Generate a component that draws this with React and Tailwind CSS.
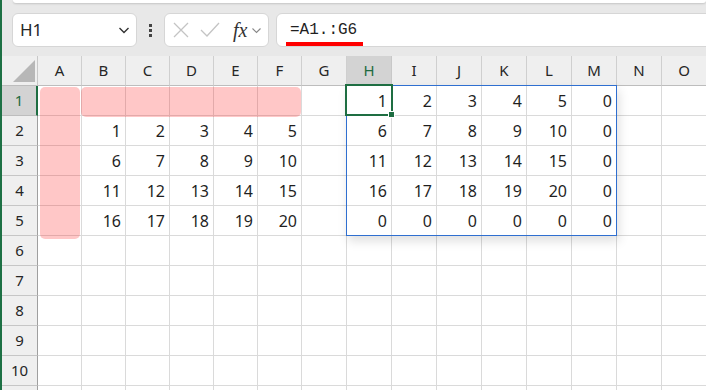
import React from 'react';

const cols = ['A', 'B', 'C', 'D', 'E', 'F', 'G', 'H', 'I', 'J', 'K', 'L', 'M', 'N', 'O'];

// values keyed by row -> column letter
const data = {
  1: { H: 1, I: 2, J: 3, K: 4, L: 5, M: 0 },
  2: { B: 1, C: 2, D: 3, E: 4, F: 5, H: 6, I: 7, J: 8, K: 9, L: 10, M: 0 },
  3: { B: 6, C: 7, D: 8, E: 9, F: 10, H: 11, I: 12, J: 13, K: 14, L: 15, M: 0 },
  4: { B: 11, C: 12, D: 13, E: 14, F: 15, H: 16, I: 17, J: 18, K: 19, L: 20, M: 0 },
  5: { B: 16, C: 17, D: 18, E: 19, F: 20, H: 0, I: 0, J: 0, K: 0, L: 0, M: 0 },
};

const rows = [1, 2, 3, 4, 5, 6, 7, 8, 9, 10, 11];

const ui = { fontFamily: '"Noto Sans", "Noto Sans CJK JP", sans-serif' };

const FormulaBar = () => (
  <div className="h-[56px] shrink-0 bg-[#e8e8e8]">
    <div className="ml-[11px] h-[3px] bg-white rounded-b-md shadow-[0_1px_2px_rgba(0,0,0,0.15)]"></div>
    <div className="mt-[10px] h-[34px] flex pl-[10px]">
      <div className="w-[125px] h-full bg-white rounded-md border border-[#d6d6d6] flex items-center justify-between pl-[7px] pr-[5px]">
        <span className="text-[17px] text-[#262626]" style={ui}>H1</span>
        <svg width="14" height="14" viewBox="0 0 14 14" fill="none" stroke="#333" strokeWidth="1.4">
          <path d="M2.5 5l4.5 4.5L11.5 5" />
        </svg>
      </div>
      <div className="w-[27px] flex items-center justify-center">
        <div className="flex flex-col gap-[2px]">
          <span className="w-[3px] h-[3px] bg-[#444]"></span>
          <span className="w-[3px] h-[3px] bg-[#444]"></span>
          <span className="w-[3px] h-[3px] bg-[#444]"></span>
        </div>
      </div>
      <div className="w-[105px] h-full bg-white rounded-md border border-[#d6d6d6] flex items-center pl-[7px]">
        <svg width="18" height="18" viewBox="0 0 18 18" fill="none" stroke="#c4c4c4" strokeWidth="1.3">
          <path d="M2 2l14 14M16 2L2 16" />
        </svg>
        <svg className="ml-[10px]" width="20" height="16" viewBox="0 0 20 16" fill="none" stroke="#c4c4c4" strokeWidth="1.3">
          <path d="M1 8l6 6L19 1" />
        </svg>
        <span className="ml-[13px] text-[20px] italic text-[#333] leading-none" style={{ fontFamily: '"Liberation Serif", serif' }}>fx</span>
        <svg className="ml-[4px]" width="11" height="11" viewBox="0 0 11 11" fill="none" stroke="#888" strokeWidth="1.1">
          <path d="M1.5 3.5l4 4 4-4" />
        </svg>
      </div>
      <div className="relative flex-1 ml-[7px] -mr-2 h-full bg-white rounded-l-md border border-[#d6d6d6] flex items-center pl-[13px]">
        <span className="text-[16px] text-[#1f1f1f]" style={{ fontFamily: '"Liberation Mono", monospace' }}>=A1.:G6</span>
        <div className="absolute left-[9px] top-[28px] w-[77px] h-[4px] bg-[#ff0000]"></div>
      </div>
    </div>
  </div>
);

const Sheet = () => (
  <div className="relative">
    <div className="grid grid-cols-[36px_repeat(6,44px)_repeat(9,45px)] auto-rows-[30px]" style={ui}>
      <div className="bg-[#efefef] border-r border-b border-r-[#c8c8c8] border-b-[#bdbdbd] relative">
        <svg className="absolute right-[2px] bottom-[3px]" width="22" height="22" viewBox="0 0 22 22">
          <polygon points="22,0 22,22 0,22" fill="#b7b7b7" />
        </svg>
      </div>
      {cols.map((c) => (
        <div
          key={c}
          className={
            c === 'H'
              ? 'bg-[#d3d3d3] text-[#1d6b40] border-r border-r-[#c8c8c8] border-b-2 border-b-[#1e6e42] flex items-center justify-center text-[15px] pt-[1px]'
              : 'bg-[#efefef] text-[#262626] border-r border-b border-r-[#cfcfcf] border-b-[#bdbdbd] flex items-center justify-center text-[15px]'
          }
        >
          {c}
        </div>
      ))}
      {rows.map((r) => (
        <React.Fragment key={r}>
          <div
            className={
              r === 1
                ? 'bg-[#d3d3d3] text-[#1d6b40] border-r-2 border-r-[#1e6e42] border-b border-b-[#bdbdbd] flex items-center justify-center text-[15px]'
                : 'bg-[#efefef] text-[#262626] border-r border-b border-r-[#9f9f9f] border-b-[#c6c6c6] flex items-center justify-center text-[15px]'
            }
          >
            {r < 11 ? r : ''}
          </div>
          {cols.map((c) => (
            <div key={c} className="bg-white border-r border-b border-[#dadada] flex items-center justify-end pr-[4px] text-[16px] text-[#1f1f1f]">
              {data[r] && data[r][c] !== undefined ? data[r][c] : ''}
            </div>
          ))}
        </React.Fragment>
      ))}
    </div>

    {/* highlighted ranges */}
    <div className="absolute left-[38px] top-[31px] w-[40px] h-[152px] rounded-[5px] bg-[rgba(255,0,0,0.22)]"></div>
    <div className="absolute left-[79px] top-[31px] w-[220px] h-[30px] rounded-[5px] bg-[rgba(255,0,0,0.22)]"></div>

    {/* spill range */}
    <div className="absolute left-[344px] top-[29px] w-[271px] h-[151px] border border-[#2f6fd0] shadow-[2px_5px_10px_rgba(0,0,0,0.13)] pointer-events-none"></div>

    {/* active cell */}
    <div className="absolute left-[343px] top-[28px] w-[48px] h-[32px] border-2 border-[#1e6e42]"></div>
    <div className="absolute left-[386px] top-[55px] w-[7px] h-[7px] bg-[#1e6e42] border border-white"></div>
  </div>
);

export default function App() {
  return (
    <div className="w-[706px] h-[390px] overflow-hidden flex flex-col border-l-2 border-[#1e7145] bg-white">
      <FormulaBar />
      <Sheet />
    </div>
  );
}
